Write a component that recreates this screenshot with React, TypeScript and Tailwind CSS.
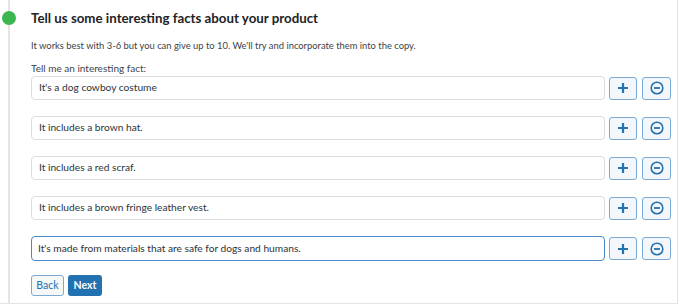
import React from "react";

const facts = [
  "It's a dog cowboy costume",
  "It includes a brown hat.",
  "It includes a red scraf.",
  "It includes a brown fringe leather vest.",
  "It's made from materials that are safe for dogs and humans.",
];

function Plus() {
  return (
    <svg width="12" height="12" viewBox="0 0 12 12">
      <path d="M6 1v10M1 6h10" stroke="#2271b1" strokeWidth="2.2" />
    </svg>
  );
}

function Minus() {
  return (
    <svg width="14" height="14" viewBox="0 0 14 14">
      <circle cx="7" cy="7" r="5.8" fill="none" stroke="#2271b1" strokeWidth="1.6" />
      <path d="M4 7h6" stroke="#2271b1" strokeWidth="1.8" />
    </svg>
  );
}

export default function App() {
  return (
    <div
      className="w-[680px] h-[306px] bg-white relative overflow-hidden"
      style={{ fontFamily: 'Lato, "Open Sans", sans-serif' }}
    >
      <div className="w-[678px] h-[304px] border-r border-b border-[#e2e4e7] relative">
        <div className="absolute left-[8px] top-0 bottom-0 w-[2px] bg-[#e5e5e5]" />
        <div className="absolute left-[2px] top-[11px] w-[14px] h-[14px] rounded-full bg-[#3cb650]" />
        <div className="pl-[31px] pr-[6px] pt-[8px]">
          <h2 className="text-[13.3px] font-bold text-[#1d2327] leading-[20px]">
            Tell us some interesting facts about your product
          </h2>
          <p className="mt-[11px] text-[9.4px] text-[#3c434a] leading-[14px]">
            It works best with 3-6 but you can give up to 10. We'll try and incorporate them into the copy.
          </p>
          <div className="mt-[8px] text-[10px] text-[#3c434a] leading-[14px]">Tell me an interesting fact:</div>
          <div className="mt-[1px] flex flex-col gap-[16px]">
            {facts.map((f, i) => {
              const focused = i === facts.length - 1;
              return (
                <div key={i} className="flex items-center">
                  <div
                    className={
                      focused
                        ? "w-[574px] h-[25px] rounded-[4px] border-[1.5px] border-[#4a87c4] flex items-center pl-[6px] text-[10.2px] text-[#2c3338]"
                        : "w-[574px] h-[24px] rounded-[4px] border border-[#dcdcde] flex items-center pl-[7px] text-[10.2px] text-[#2c3338]"
                    }
                  >
                    {f}
                  </div>
                  <button className="ml-[4px] w-[28px] h-[23px] rounded-[3px] border border-[#7aa9d6] bg-[#f3f6fa] flex items-center justify-center">
                    <Plus />
                  </button>
                  <button className="ml-[5px] w-[29px] h-[23px] rounded-[3px] border border-[#7aa9d6] bg-[#f3f6fa] flex items-center justify-center">
                    <Minus />
                  </button>
                </div>
              );
            })}
          </div>
          <div className="mt-[14px] flex gap-[4px]">
            <button className="w-[33px] h-[21px] rounded-[3px] border border-[#7aa9d6] bg-[#f6f7f7] text-[10.5px] text-[#2271b1] flex items-center justify-center">
              Back
            </button>
            <button className="w-[34px] h-[21px] rounded-[3px] bg-[#2271b1] text-[10.5px] text-white font-bold flex items-center justify-center">
              Next
            </button>
          </div>
        </div>
      </div>
    </div>
  );
}
